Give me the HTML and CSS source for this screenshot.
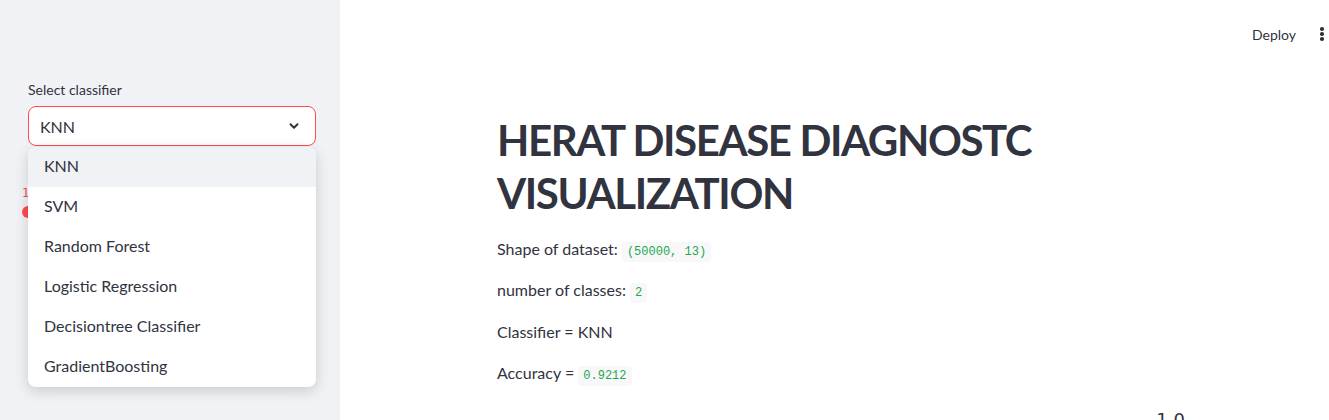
FILE: index.html
```html
<!DOCTYPE html>
<html>
<head>
<meta charset="utf-8">
<link rel="stylesheet" href="styles.css">
</head>
<body>
<div class="app">
  <aside class="sidebar">
    <div class="widget">
      <label class="wlabel">Select classifier</label>
      <div class="selectwrap">
        <div class="select">
          <span>KNN</span>
          <svg class="chev" width="14" height="14" viewBox="0 0 24 24"><path d="M6 9l6 6 6-6" fill="none" stroke="#31333f" stroke-width="3.4" stroke-linecap="round" stroke-linejoin="round"/></svg>
        </div>
        <ul class="menu">
          <li class="active">KNN</li>
          <li>SVM</li>
          <li>Random Forest</li>
          <li>Logistic Regression</li>
          <li>Decisiontree Classifier</li>
          <li>GradientBoosting</li>
        </ul>
      </div>
    </div>
    <div class="slider">
      <label class="wlabel">K</label>
      <div class="track">
        <span class="thumbval">1</span>
        <span class="thumb"></span>
      </div>
    </div>
  </aside>
  <main class="main">
    <header class="topbar">
      <span class="deploy">Deploy</span>
      <span class="kebab"><i></i><i></i><i></i></span>
    </header>
    <section class="content">
      <h1>HERAT DISEASE DIAGNOSTC VISUALIZATION</h1>
      <p>Shape of dataset: <code>(50000, 13)</code></p>
      <p>number of classes: <code>2</code></p>
      <p>Classifier = KNN</p>
      <p>Accuracy = <code>0.9212</code></p>
      <div class="figure"><span class="tick">1.0</span></div>
    </section>
  </main>
</div>
</body>
</html>
```

FILE: styles.css
```css
* { box-sizing: border-box; }
html, body { margin: 0; padding: 0; }
body {
  font-family: "Lato", "Noto Sans", sans-serif;
  color: #31333f;
  background: #fff;
  overflow: hidden;
}
.app {
  display: flex;
  width: 1329px;
  height: 420px;
  overflow: hidden;
}
.sidebar {
  width: 340px;
  flex: none;
  background: #f0f2f6;
  padding: 78px 24px 0 28px;
}
.widget { display: flex; flex-direction: column; }
.wlabel {
  font-size: 14px;
  height: 24px;
  line-height: 24px;
  margin-bottom: 4px;
  color: #31333f;
}
.selectwrap { position: relative; width: 288px; }
.select {
  height: 40px;
  border: 1px solid #ff4b4b;
  border-radius: 8px;
  background: #fff;
  display: flex;
  align-items: center;
  justify-content: space-between;
  padding: 0 14px 0 11px;
  font-size: 16px;
}
.chev { display: block; }
.menu {
  position: absolute;
  top: 41px;
  left: 0;
  width: 288px;
  margin: 0;
  padding: 0;
  list-style: none;
  background: #fff;
  border-radius: 8px;
  box-shadow: 0 4px 14px rgba(0,0,0,0.16);
  overflow: hidden;
  z-index: 5;
}
.menu li {
  height: 40px;
  line-height: 38px;
  padding-left: 16px;
  font-size: 16px;
}
.menu li.active { background: #f0f2f6; }
.slider { margin-top: 16px; }
.track {
  position: relative;
  height: 40px;
}
.thumbval {
  position: absolute;
  left: -6px;
  top: 0;
  font-family: "DejaVu Sans Mono", monospace;
  font-size: 12px;
  color: #ff4b4b;
}
.thumb {
  position: absolute;
  left: -6px;
  top: 20px;
  width: 12px;
  height: 12px;
  border-radius: 50%;
  background: #ff4b4b;
}
.main {
  flex: 1;
  display: flex;
  flex-direction: column;
  min-width: 0;
}
.topbar {
  flex: none;
  height: 68px;
  display: flex;
  align-items: center;
  justify-content: flex-end;
  padding-right: 5px;
  font-size: 14px;
}
.deploy { margin-right: 24px; }
.kebab {
  display: flex;
  flex-direction: column;
  gap: 1.5px;
  width: 4px;
}
.kebab i {
  display: block;
  width: 3.5px;
  height: 3.5px;
  border-radius: 50%;
  background: #31333f;
}
.content {
  flex: none;
  padding-left: 157px;
  width: 861px;
}
h1 {
  font-size: 42px;
  letter-spacing: -1.4px;
  font-weight: 700;
  line-height: 53px;
  margin: 46px 0 16px;
}
p {
  font-size: 16px;
  line-height: 25.6px;
  margin: 0 0 15.7px;
}
code {
  font-family: "Liberation Mono", "DejaVu Sans Mono", monospace;
  font-size: 12px;
  line-height: 1;
  color: #21a84e;
  background: #f8f8fa;
  padding: 3px 5px;
  border-radius: 4px;
}
.figure {
  display: flex;
  justify-content: flex-end;
  padding-right: 16px;
  padding-top: 8px;
}
.tick {
  font-family: "DejaVu Sans", sans-serif;
  font-size: 18px;
}
```
